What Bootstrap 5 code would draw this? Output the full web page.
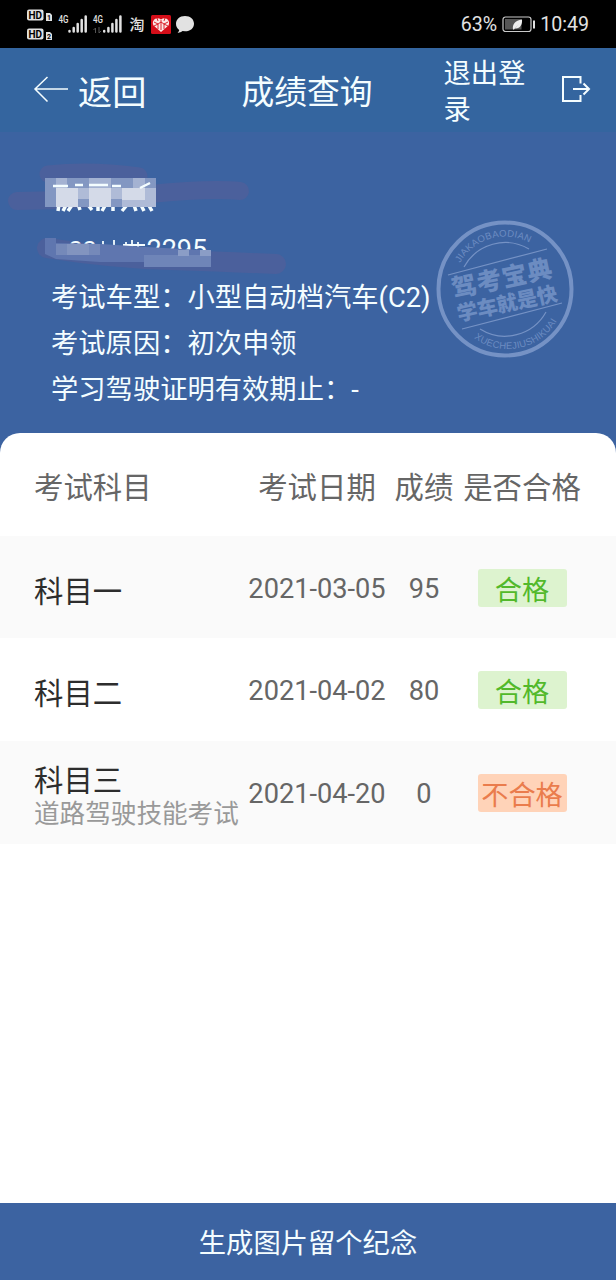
<!DOCTYPE html>
<html lang="zh-CN">
<head>
<meta charset="utf-8">
<meta name="viewport" content="width=device-width, initial-scale=1">
<title>成绩查询</title>
<link href="https://cdn.jsdelivr.net/npm/bootstrap@5.3.0/dist/css/bootstrap.min.css" rel="stylesheet">
<style>
body{font-family:Roboto,"Noto Sans CJK SC",sans-serif;color:#666;background:#3c63a1;overflow:hidden}
.statusbar{height:48px;background:#000;color:#e2e2e2;font-size:19.6px}
.clock-group{padding-right:27px;padding-top:1px}
.topbar{height:84px;background:#34659f;color:#f4fdff}
.back-label{font-size:34.2px;line-height:40px;padding-top:5px}
.page-title{font-size:32.8px;line-height:40px;padding-top:6px;margin-left:95px}
.logout{font-size:27.3px;line-height:36px;width:84px;padding-top:4px;margin-left:71px}
.hero{height:301px;color:#f4fdff;font-size:27.3px;padding:0 51px}
.hero-lines{padding-top:143px}
.hero-lines div{line-height:46px;white-space:nowrap}
.redacted{left:0;top:18px}
.stamp{left:425px;top:78px}
.sheet{border-radius:20px 20px 0 0;background:#fff}
.score-row{grid-template-columns:214px 138px 76px 120px;padding:4px 34px 0 34px;height:102.7px;white-space:nowrap;font-size:27.2px;text-align:center}
.score-head{font-size:29.4px;padding-top:7px}
.striped{background:#fafafa}
.subject{font-size:29.4px;color:#2d2d2d;line-height:34px;text-align:left;padding-top:5px}
.subject-note{font-size:25.6px;color:#999;line-height:32px}
.result{width:89px;height:38px;border-radius:3px;line-height:38px;padding-top:3px;margin:-3px auto 0}
.pass{background:#ddf3cf;color:#52b92b}
.fail{background:#ffd3b8;color:#ea7c4c}
.savebar{height:77px;background:#3c63a1;color:#f4fdff;font-size:27.3px}
.savebar span{display:block;padding-top:5px}
</style>
</head>
<body>
<div class="d-flex flex-column vh-100">
<header class="statusbar d-flex justify-content-between">
<svg width="210" height="48" viewBox="0 0 210 48" font-family="Roboto,'Noto Sans CJK SC',sans-serif" fill="#e2e2e2">
<rect x="27" y="9.500" width="16.500" height="11" rx="2"/><rect x="27" y="28.500" width="16.500" height="11" rx="2"/>
<g fill="#000" font-size="10" font-weight="700"><text x="28.500" y="18.600" textLength="13.500">HD</text><text x="28.500" y="37.600" textLength="13.500">HD</text></g>
<path d="M46 13h4l2 2v6h-6zM46 32h4l2 2v6h-6z"/><g fill="#000" font-size="7" font-weight="700"><text x="47" y="20">1</text><text x="47" y="39">2</text></g>
<g font-size="10.500" font-weight="500"><text x="58.500" y="23" textLength="10" lengthAdjust="spacingAndGlyphs">4G</text><text x="93" y="23" textLength="10" lengthAdjust="spacingAndGlyphs">4G</text></g>
<g stroke="#e2e2e2" stroke-width="2.500" stroke-linecap="round"><path d="M69.500 31v.5M73.700 28v3.500M77.700 24v7.500M81.700 20v11.500M85.700 16.500v15M104.200 31v.5M108.400 28v3.500M112.400 24v7.500M116.400 20v11.500M120.400 16.500v15"/></g>
<path d="M95.500 33v-5l-2 2M99 27v6l2-2" stroke="#555" fill="none"/>
<text x="129.500" y="30" font-size="15" font-weight="500">淘</text>
<rect x="151" y="15" width="20" height="19" rx="1.500" fill="#d60e19"/>
<path d="M161 32l-7.500-6.500c-2.500-5 3-9.500 7.500-6 4.500-3.500 10 1 7.500 6z" fill="#fce9e6"/>
<path d="M154 22l4 2 3-2 3 2 4-2M154 26l4-2M168 26l-4-2M158 24v5M164 24v5M161 20v10M157 18l1 3M165 18l-1 3" stroke="#d60e19" stroke-width=".9" fill="none"/>
<path d="M185 16c5.500 0 9 3.400 9 7.700 0 4.300-3.500 7.600-9 7.600l-2.500-.2c-1.500 1.300-3.500 1.700-5 1.500 1-.8 1.600-1.600 1.700-2.700-2-1.400-3.200-3.500-3.200-6.200 0-4.300 3.500-7.700 9-7.700z"/>
</svg>
<div class="clock-group d-flex align-items-center">
<span>63%</span>
<svg class="ms-1 me-1" width="35" height="20" viewBox="0 0 35 20"><rect x="2" y="2" width="28" height="14.500" rx="2.500" fill="none" stroke="#c9c9c9" stroke-width="1.200"/><rect x="4" y="4" width="16.500" height="10.500" fill="#555"/><path d="M32 5.500h2v8h-2z" fill="#e2e2e2"/><path d="M12 14.500c-1-5 2-9 9-10 .5 5-2 9.500-7 9l4-5-5 6z" fill="#eee"/></svg>
<span>10:49</span>
</div>
</header>
<nav class="topbar d-flex flex-shrink-0 align-items-center">
<svg class="flex-shrink-0" width="78" height="40" viewBox="0 0 78 40" fill="none" stroke="#f4fdff" stroke-width="1.500"><path d="M68 19H35M47.500 7L35 19l12.500 12.500"/></svg>
<span class="back-label text-nowrap">返回</span>
<h1 class="page-title fw-normal mb-0 text-nowrap">成绩查询</h1>
<span class="logout flex-shrink-0">退出登录</span>
<svg class="flex-shrink-0 ms-auto me-4" width="30" height="32" viewBox="0 0 30 32" fill="none" stroke="#f4fdff" stroke-width="2"><path d="M18.500 9.500V3H1v24h17.500v-6M11 15h15M21.500 9.500L27 15l-5.500 5.500"/></svg>
</nav>
<section class="hero position-relative flex-shrink-0">
<svg class="redacted position-absolute" width="300" height="135" viewBox="0 150 300 135">
<g fill="none" stroke="#4b609c" stroke-linecap="round"><path d="M48 174Q90 169 139 176" stroke-width="17"/><path d="M17 201Q90 200 150 194T240 191" stroke-width="18"/><path d="M47 248Q110 258 170 260T276 264" stroke-width="20"/></g>
<path d="M59 204l-1 7M67 203l-4 8M72 205l-4 6M78 204l2 6M88 205l4 5M98 204v7M106 204l-4 7M113 203v8M127 205l-5 6M134 205l2 6M141 205l3 6M148 204l4 7" fill="none" stroke="#f4fdff" stroke-width="3.500"/>
<path d="M45 178h11v29H45zM56 178h100v29H56z" fill="#8397c2"/>
<path d="M56 178h11v10H56zM89 178h22v10H89zM133 178h12v10h-12z" fill="#a4b2d2"/>
<path d="M56 188h22v19H56zM89 188h22v19H89zM122 188h23v12h-23z" fill="#d4dae8"/>
<path d="M78 188h11v11H78zM111 188h11v11h-11zM145 188h11v19h-11zM122 200h23v7h-23z" fill="#afbbd7"/>
<path d="M53 186h15M75 185h8M89 185h19M112 186h9M140 188l10-5" stroke="#f4fdff" stroke-width="2.500" fill="none"/>
<text x="68" y="259" font-size="26.500" fill="#f4fdff" font-family="Roboto,sans-serif" textLength="29">00</text>
<path d="M103 241v7M114 240v8M126 242v6M132 240v8M138 242v6M123 245h22" stroke="#f4fdff" stroke-width="1.800"/>
<text x="146.500" y="259" font-size="27" fill="#f4fdff" font-family="Roboto,sans-serif">2295</text>
<path d="M45 238h11v5l45 1 45 3 55 3 10 1v16h-67v-5h-44l-44-3-11-5z" fill="#5f76af"/>
<path d="M56 244h44v11H56z" fill="#7589b9"/><path d="M67 244h22v11H67z" fill="#8294bf"/><path d="M144 255h67v12h-67z" fill="#6f85b8"/><path d="M178 250h11v6h-11zM200 250h11v6h-11z" fill="#8b9dc6"/>
</svg>
<div class="hero-lines">
<div>考试车型：小型自动档汽车(C2)</div>
<div>考试原因：初次申领</div>
<div>学习驾驶证明有效期止：-</div>
</div>
<svg class="stamp position-absolute" width="160" height="160" viewBox="0 0 160 160" fill="#6c8cc1" font-family="'Noto Sans CJK SC',sans-serif">
<defs><path id="upperArc" d="M35 53A52 52 0 0 1 110 36"/><path id="lowerArc" d="M49 128A57 57 0 0 0 134 107"/></defs>
<circle cx="80" cy="79" r="66.500" fill="none" stroke="#7592c5" stroke-width="4"/>
<g fill="none" stroke="#7592c5" stroke-width="1.200"><path d="M23 65L122 39M37 119L137 93M39 57A47 47 0 0 1 104 39M55 119A47 47 0 0 0 121 102"/></g>
<g font-size="9.500" font-family="'Liberation Sans',sans-serif"><text><textPath href="#upperArc" textLength="80">JIAKAOBAODIAN</textPath></text><text><textPath href="#lowerArc" textLength="95">XUECHEJIUSHIKUAI</textPath></text></g>
<g transform="rotate(-12 80 79)" font-weight="900"><text x="28" y="77" font-size="25" textLength="102">驾考宝典</text><text x="28" y="101" font-size="20.500" textLength="102">学车就是快</text></g>
</svg>
</section>
<main class="sheet flex-grow-1">
<div class="score-row score-head d-grid align-items-center"><span class="text-start">考试科目</span><span>考试日期</span><span>成绩</span><span>是否合格</span></div>
<div class="score-row striped d-grid align-items-center"><div class="subject">科目一</div><span>2021-03-05</span><span>95</span><div class="result pass">合格</div></div>
<div class="score-row d-grid align-items-center"><div class="subject">科目二</div><span>2021-04-02</span><span>80</span><div class="result pass">合格</div></div>
<div class="score-row striped d-grid align-items-center"><div class="subject">科目三<div class="subject-note">道路驾驶技能考试</div></div><span>2021-04-20</span><span>0</span><div class="result fail">不合格</div></div>
</main>
<button class="savebar btn rounded-0 border-0 p-0 w-100 flex-shrink-0"><span>生成图片留个纪念</span></button>
</div>
<script src="https://cdn.jsdelivr.net/npm/bootstrap@5.3.0/dist/js/bootstrap.bundle.min.js"></script>
</body>
</html>
